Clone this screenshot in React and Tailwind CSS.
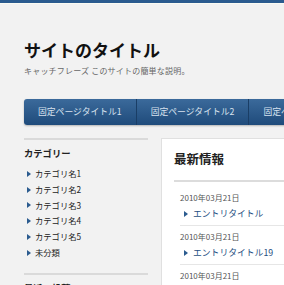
const categories = ["カテゴリ名1", "カテゴリ名2", "カテゴリ名3", "カテゴリ名4", "カテゴリ名5", "未分類"];

const pages = ["固定ページタイトル1", "固定ページタイトル2", "固定ページタイトル3"];

const entries = [
  { date: "2010年03月21日", title: "エントリタイトル" },
  { date: "2010年03月21日", title: "エントリタイトル19" },
  { date: "2010年03月21日", title: "エントリタイトル18" }
];

function Arrow() {
  return <span className="inline-block h-0 w-0 border-y-[3px] border-l-[4px] border-y-transparent border-l-[#2b5b8f]" />;
}

export default function App() {
  return (
    <div className="h-[285px] w-[284px] overflow-hidden bg-[#f2f2f2] font-['Noto_Sans_CJK_JP','Noto_Sans',sans-serif] text-[#222]">
      <div className="h-[3px] bg-[#2b5b8f]" />
      <div className="h-px bg-[#fbfbf3]" />

      <div className="w-[600px] pl-[24px]">
        <header>
          <h1 className="mt-[36px] text-[17px] font-bold leading-[20px] text-[#111]">サイトのタイトル</h1>
          <p className="mt-[5px] text-[8px] leading-[12px] tracking-[0.2px] text-[#666]">キャッチフレーズ このサイトの簡単な説明。</p>
        </header>

        <nav className="mt-[22px] flex h-[26px] rounded-l-[3px] bg-gradient-to-b from-[#3b6a9b] to-[#1f4b7b] shadow-[0_1px_2px_rgba(0,0,0,0.25)]">
          {pages.map((p) => (
            <div
              key={p}
              className="flex items-center border-r border-[#1a3e66] px-[14px] text-[8.8px] text-[#d8e2ee]"
            >
              {p}
            </div>
          ))}
        </nav>

        <div className="mt-[13px] flex gap-[13px]">
          <aside className="w-[124px]">
            <div className="border-t-2 border-[#dadada]">
              <h2 className="mt-[6px] text-[9.3px] font-bold leading-[14px]">カテゴリー</h2>
              <ul className="mt-[6px]">
                {categories.map((c) => (
                  <li key={c} className="flex items-center gap-[4px] pl-[3px] text-[8.3px] leading-[15.8px]">
                    <Arrow />
                    {c}
                  </li>
                ))}
              </ul>
            </div>
            <div className="mt-[12px] border-t-2 border-[#dadada]">
              <h2 className="mt-[6px] text-[9.3px] font-bold leading-[14px]">最近の投稿</h2>
            </div>
          </aside>

          <main className="flex-1 border border-[#e0e0e0] bg-white pl-[12px]">
            <h2 className="mt-[11px] border-b-2 border-[#dcdcdc] pb-[12px] text-[12.5px] font-bold leading-[18px]">最新情報</h2>
            <ul className="ml-[6px] mt-[5px]">
              {entries.map((e, i) => (
                <li key={i} className="border-b border-[#e6e6e6] pb-[4px] pt-[5px]">
                  <div className="text-[8px] leading-[12px] text-[#555]">{e.date}</div>
                  <div className="mt-[3px] flex items-center gap-[5px] pl-[4px] text-[8.8px] leading-[14px] text-[#1f4f82]">
                    <Arrow />
                    {e.title}
                  </div>
                </li>
              ))}
            </ul>
          </main>
        </div>
      </div>
    </div>
  );
}
